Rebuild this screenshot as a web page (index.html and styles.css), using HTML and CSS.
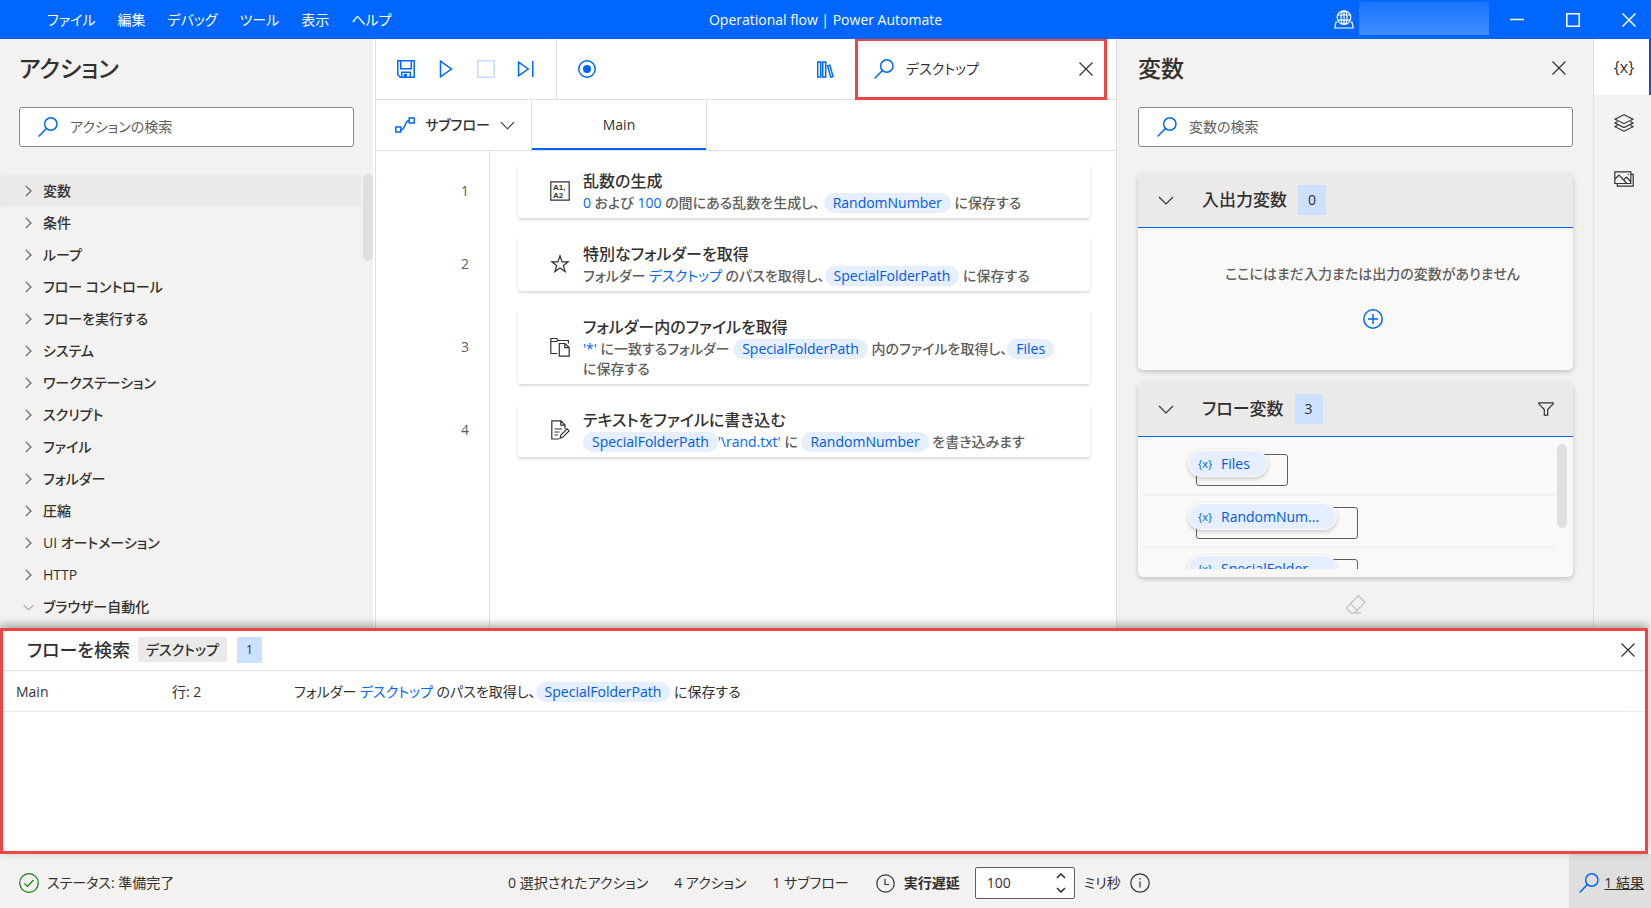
FILE: index.html
```html
<!DOCTYPE html>
<html lang="ja">
<head>
<meta charset="utf-8">
<meta name="viewport" content="width=device-width, initial-scale=1">
<title>Operational flow | Power Automate</title>
<link rel="stylesheet" href="styles.css">
</head>
<body>
<svg class="defs" aria-hidden="true">
  <symbol id="search" viewBox="0 0 20 20"><circle cx="12.8" cy="7" r="6.2"/><path d="M8.4 11.4.6 19.4"/></symbol>
  <symbol id="close" viewBox="0 0 14 14"><path d="M.5.5l13 13M13.5.5l-13 13"/></symbol>
  <symbol id="down" viewBox="0 0 16 9"><path d="M1 1l7 7 7-7"/></symbol>
  <symbol id="right" viewBox="0 0 7 12"><path d="M.8.8 6 6 .8 11.2"/></symbol>
</svg>

<header class="titlebar">
  <nav class="menu">
    <button>ファイル</button><button>編集</button><button>デバッグ</button><button>ツール</button><button>表示</button><button>ヘルプ</button>
  </nav>
  <h1 class="window-title">Operational flow | Power Automate</h1>
  <div class="window-tools">
    <svg class="icon globe" viewBox="0 0 20 19"><circle cx="10" cy="7.6" r="6.8"/><ellipse cx="10" cy="7.6" rx="3" ry="6.8"/><path d="M3.8 5h12.4M3.8 10.2h12.4M10 .8v13.6M3.4 12.2H2L.8 18h18.4L18 12.2h-1.4"/></svg>
    <span class="account"></span>
    <button aria-label="最小化"><svg class="icon" width="14" height="14" viewBox="0 0 14 14"><path d="M0 6.500h14"/></svg></button>
    <button aria-label="最大化"><svg class="icon" width="14" height="14" viewBox="0 0 14 14"><path d="M.8.8h12.400v12.400H.8z"/></svg></button>
    <button aria-label="閉じる"><svg class="icon" width="14" height="14"><use href="#close"/></svg></button>
  </div>
</header>

<main class="workspace">
  <aside class="actions">
    <h2>アクション</h2>
    <label class="search-box"><svg class="icon blue" width="20" height="20"><use href="#search"/></svg><input type="text" placeholder="アクションの検索" aria-label="アクションの検索"></label>
    <div class="action-area">
      <ul class="action-list">
        <li><button class="selected"><svg class="icon" width="7" height="12"><use href="#right"/></svg>変数</button></li>
        <li><button><svg class="icon" width="7" height="12"><use href="#right"/></svg>条件</button></li>
        <li><button><svg class="icon" width="7" height="12"><use href="#right"/></svg>ループ</button></li>
        <li><button><svg class="icon" width="7" height="12"><use href="#right"/></svg>フロー コントロール</button></li>
        <li><button><svg class="icon" width="7" height="12"><use href="#right"/></svg>フローを実行する</button></li>
        <li><button><svg class="icon" width="7" height="12"><use href="#right"/></svg>システム</button></li>
        <li><button><svg class="icon" width="7" height="12"><use href="#right"/></svg>ワークステーション</button></li>
        <li><button><svg class="icon" width="7" height="12"><use href="#right"/></svg>スクリプト</button></li>
        <li><button><svg class="icon" width="7" height="12"><use href="#right"/></svg>ファイル</button></li>
        <li><button><svg class="icon" width="7" height="12"><use href="#right"/></svg>フォルダー</button></li>
        <li><button><svg class="icon" width="7" height="12"><use href="#right"/></svg>圧縮</button></li>
        <li><button><svg class="icon" width="7" height="12"><use href="#right"/></svg>UI オートメーション</button></li>
        <li><button><svg class="icon" width="7" height="12"><use href="#right"/></svg>HTTP</button></li>
        <li><button><svg class="icon" width="11" height="7"><use href="#down"/></svg>ブラウザー自動化</button></li>
      </ul>
      <span class="thumb"></span>
    </div>
  </aside>

  <section class="editor">
    <div class="toolbar">
      <div class="run-tools">
        <button aria-label="保存"><svg class="icon blue" width="18" height="18" viewBox="0 0 18 18"><path d="M.8.8h16.400v16.400H3.200L.8 14.800zM3.700.8v8h10.600v-8M4.700 17.200v-5h8.600v5M7.500 17v-2.400h1.600V17"/></svg></button>
        <button aria-label="実行"><svg class="icon blue" width="18" height="18" viewBox="0 0 18 18"><path d="M3.500 1.200v15.600L14.500 9z"/></svg></button>
        <button aria-label="停止" disabled><svg class="icon pale" width="18" height="18" viewBox="0 0 18 18"><path d="M.8.8h16.400v16.400H.8z"/></svg></button>
        <button aria-label="次のアクション"><svg class="icon blue" width="18" height="18" viewBox="0 0 18 18"><path d="M1.600 2.200v13.600L11.200 9zM15.800 1v16"/></svg></button>
      </div>
      <button aria-label="レコーダー"><svg class="icon blue" width="18" height="18" viewBox="0 0 18 18"><circle cx="9" cy="9" r="8.200"/><circle class="dot" cx="9" cy="9" r="4"/></svg></button>
      <button class="library" aria-label="ライブラリ"><svg class="icon blue" width="17" height="17" viewBox="0 0 17 17"><path d="M.7 1h3v15h-3zM5.700 1h3v15h-3zM10.600 4.700l2.200-.6 3.200 11.400-2.300.6z"/></svg></button>
      <label class="flow-search"><svg class="icon blue" width="20" height="20"><use href="#search"/></svg><input type="text" value="デスクトップ" aria-label="フローを検索"><button aria-label="クリア"><svg class="icon" width="14" height="14"><use href="#close"/></svg></button></label>
    </div>
    <div class="tabs">
      <button class="subflow"><svg class="icon blue" width="20" height="16" viewBox="0 0 20 16"><path d="M.8 10h5v5h-5zM14.200 1h5v5h-5zM5.800 13C10.500 13 9.500 3.500 14.200 3.500"/></svg><span>サブフロー</span><svg class="icon" width="15" height="9"><use href="#down"/></svg></button>
      <button class="tab">Main</button>
    </div>
    <ol class="steps">
      <li><span class="line">1</span><article class="step">
        <svg class="icon" width="20" height="20" viewBox="0 0 20 20"><path d="M.8.8h18.400v18.400H.8z"/><text x="3" y="9">A1,</text><text x="3" y="17">A2</text></svg>
        <div><h3>乱数の生成</h3><p><b>0</b> および <b>100</b> の間にある乱数を生成し、 <i>RandomNumber</i> に保存する</p></div></article></li>
      <li><span class="line">2</span><article class="step">
        <svg class="icon" width="20" height="20" viewBox="0 0 20 20"><path d="M10 1.800l2.100 6h6.100l-4.900 3.700 1.800 6.100-5.100-3.700-5.100 3.700 1.800-6.100L1.800 7.800h6.100z"/></svg>
        <div><h3>特別なフォルダーを取得</h3><p>フォルダー <b>デスクトップ</b> のパスを取得し、<i>SpecialFolderPath</i> に保存する</p></div></article></li>
      <li><span class="line">3</span><article class="step">
        <svg class="icon" width="20" height="20" viewBox="0 0 20 20"><path d="M7.500 16.500H.8V1.500h6l1.300 2h10.300v3M.8 4.500h6l1.300-1M9.300 6.500h5.700l4.200 4v8.700H9.300zM14.800 6.700v4h4.200"/></svg>
        <div><h3>フォルダー内のファイルを取得</h3><p><b>'*'</b> に一致するフォルダー <i>SpecialFolderPath</i> 内のファイルを取得し、<i>Files</i><br>に保存する</p></div></article></li>
      <li><span class="line">4</span><article class="step">
        <svg class="icon" width="20" height="20" viewBox="0 0 20 20"><path d="M9 19H1.800V.8h9.200l4 4.200v4M10.800 1v4.200H15M4.500 9h7.500M4.500 12h5M4.500 15h3.500M10 18.300l.9-3.200 6.200-6.200 2 2-6.200 6.200z"/></svg>
        <div><h3>テキストをファイルに書き込む</h3><p><i>SpecialFolderPath</i><b>'\rand.txt'</b> に <i>RandomNumber</i> を書き込みます</p></div></article></li>
    </ol>
  </section>

  <aside class="variables">
    <div class="panel-head"><h2>変数</h2><button aria-label="閉じる"><svg class="icon" width="14" height="14"><use href="#close"/></svg></button></div>
    <label class="search-box"><svg class="icon blue" width="20" height="20"><use href="#search"/></svg><input type="text" placeholder="変数の検索" aria-label="変数の検索"></label>
    <section class="card">
      <header><svg class="icon" width="16" height="9"><use href="#down"/></svg><h3>入出力変数</h3><span class="count">0</span></header>
      <div class="empty"><p>ここにはまだ入力または出力の変数がありません</p>
        <button aria-label="追加"><svg class="icon blue" width="20" height="20" viewBox="0 0 20 20"><circle cx="10" cy="10" r="9.200"/><path d="M10 5v10M5 10h10"/></svg></button></div>
    </section>
    <section class="card">
      <header><svg class="icon" width="16" height="9"><use href="#down"/></svg><h3>フロー変数</h3><span class="count">3</span><button class="filter" aria-label="フィルター"><svg class="icon" width="16" height="14" viewBox="0 0 16 14"><path d="M.8.800h14.400v1L9.700 7.500v5.700H6.300V7.500L.8 1.800z"/></svg></button></header>
      <div class="var-area">
        <ul class="var-list">
          <li><span class="frame short"><button class="pill"><small>{x}</small>Files</button></span></li>
          <li><span class="frame"><button class="pill"><small>{x}</small>RandomNum...</button></span></li>
          <li><span class="frame"><button class="pill"><small>{x}</small>SpecialFolder...</button></span></li>
        </ul>
        <span class="thumb"></span>
      </div>
    </section>
    <button class="eraser" aria-label="値の消去" disabled><svg class="icon" width="20" height="19" viewBox="0 0 20 19"><path d="M12.500.8l6.500 6.500-8.200 8.200-1.800 2.500H5L1 14l-.3-1.500zM4.600 8.700l6.400 6.600M5 18h10"/></svg></button>
  </aside>

  <nav class="rail">
    <button class="active" aria-label="変数">{x}</button>
    <button aria-label="UI 要素"><svg class="icon" width="20" height="18" viewBox="0 0 20 18"><path d="M10 .8l9 4.400-9 4.500-9-4.500zM3.500 7.500L1 9l9 4.500L19 9l-2.500-1.500M3.500 11.300L1 12.700l9 4.500 9-4.500-2.500-1.400"/></svg></button>
    <button aria-label="画像"><svg class="icon" width="20" height="16" viewBox="0 0 20 16"><path d="M.8.800h16v11.700H.8zM17 3.300h2.200v11.900H3.300v-2.700M1 8l4-4 7.500 8M9.500 9l3-3 4 4.500"/><path d="M14 3.500h1"/></svg></button>
  </nav>
</main>

<section class="results">
  <header><h2>フローを検索</h2><span class="term">デスクトップ</span><span class="count">1</span><button aria-label="閉じる"><svg class="icon" width="14" height="14"><use href="#close"/></svg></button></header>
  <table><tbody><tr><td class="where">Main</td><td class="row-no">行: 2</td><td>フォルダー <b>デスクトップ</b> のパスを取得し、<i>SpecialFolderPath</i> に保存する</td></tr></tbody></table>
</section>

<footer class="status">
  <div class="state"><svg class="icon ok" width="20" height="20" viewBox="0 0 20 20"><circle cx="10" cy="10" r="9.300"/><path d="M5.500 10.500l3 3 6-6.500"/></svg>ステータス: 準備完了</div>
  <div class="facts"><span>0 選択されたアクション</span><span>4 アクション</span><span>1 サブフロー</span></div>
  <div class="delay">
    <svg class="icon" width="19" height="19" viewBox="0 0 19 19"><circle cx="9.500" cy="9.500" r="8.700"/><path d="M9 5v5.500h4"/></svg>
    <label for="delay">実行遅延</label>
    <span class="stepper"><input id="delay" type="number" value="100"><span><button aria-label="増やす"><svg class="icon" width="10" height="6" viewBox="0 0 10 6"><path d="M1 5l4-4 4 4"/></svg></button><button aria-label="減らす"><svg class="icon" width="10" height="6" viewBox="0 0 10 6"><path d="M1 1l4 4 4-4"/></svg></button></span></span>
    <span>ミリ秒</span>
    <svg class="icon" width="20" height="20" viewBox="0 0 20 20"><circle cx="10" cy="10" r="9.200"/><path d="M10 8.500v6M10 5v1.500"/></svg>
  </div>
  <a class="hits" href="#"><svg class="icon blue" width="20" height="20"><use href="#search"/></svg><span>1 結果</span></a>
</footer>
</body>
</html>
```
FILE: styles.css
```css
* { box-sizing: border-box; }
body {
  margin: 0;
  height: 100vh;
  display: flex;
  flex-direction: column;
  overflow: hidden;
  background: #f3f2f1;
  color: #323130;
  font: 14px/20px "Open Sans", "Noto Sans CJK JP", sans-serif;
  font-feature-settings: "palt";
}
h1, h2, h3, p, ul, ol { margin: 0; padding: 0; font-weight: 500; }
ul, ol { list-style: none; }
button, input { font: inherit; font-feature-settings: inherit; color: inherit; border: 0; padding: 0; background: none; }
input { outline: 0; min-width: 0; }
button { display: flex; align-items: center; justify-content: center; white-space: nowrap; }
b { font-weight: 400; color: #0066ff; }
i { font-style: normal; color: #0058e6; background: #e5efff; border-radius: 10px; padding: 0 9px; display: inline-block; line-height: 20px; }
.defs { position: absolute; width: 0; height: 0; }
.icon { fill: none; stroke: currentColor; stroke-width: 1.2; flex: none; display: block; }
.blue { color: #0066ff; stroke-width: 1.5; }
.pale { color: #c5dcff; stroke-width: 1.6; }
.dot { fill: currentColor; stroke: none; }
.thumb { width: 10px; border-radius: 5px; background: #e1dfdd; flex: none; }
.count { background: #cce0ff; width: 28px; height: 30px; line-height: 30px; text-align: center; }

.titlebar { display: grid; grid-template-columns: 1fr auto 1fr; align-items: center; height: 39px; flex: none; background: #0066ff; color: #fff; }
.menu { display: flex; gap: 22px; padding-left: 47px; }
.window-title { font-size: 14px; font-weight: 400; }
.window-tools { display: flex; justify-content: flex-end; align-items: center; padding-right: 15px; }
.window-tools button { width: 15px; height: 30px; margin-left: 41px; }
.window-tools button:first-of-type { margin-left: 20px; }
.window-tools .icon { stroke-width: 1.5; }
.window-tools .globe { width: 20px; height: 19px; stroke-width: 1.2; }
.account { width: 130px; height: 33px; margin: 0 0 2px 5px; background: linear-gradient(#1a75ff, #408cff); }

.workspace { display: grid; grid-template-columns: 375px 1fr 476px 58px; flex: 1; min-height: 0; overflow: hidden; }
h2 { font-size: 23px; line-height: 32px; }
.actions { padding: 13px 0 0; border-right: 2px solid #fff; min-height: 0; }
.actions h2 { padding-left: 19px; margin-bottom: 23px; }
.search-box { display: flex; align-items: center; gap: 12px; height: 40px; padding: 0 19px 0 18px; border: 1px solid #8a8886; border-radius: 3px; background: #fff; }
.search-box input { flex: 1; }
.search-box input::placeholder { color: #605e5c; opacity: 1; }
.actions .search-box { margin: 0 19px 27px; }
.action-area { display: flex; justify-content: space-between; }
.action-list { width: 361px; padding-top: 1px; }
.action-list button { width: 100%; height: 32px; justify-content: flex-start; padding-left: 25px; gap: 11px; font-weight: 500; }
.action-list svg { color: #605e5c; }
.action-list li:last-child button { padding-left: 23px; gap: 9px; }
.action-list .selected { background: #ebeae9; border-radius: 2px; }
.action-area .thumb { height: 87px; }

.editor { background: #fff; border: solid #e1dfdd; border-width: 0 1px; display: flex; flex-direction: column; min-width: 0; }
.toolbar { display: flex; align-items: center; height: 61px; flex: none; border-bottom: 1px solid #e1dfdd; }
.run-tools { display: flex; align-items: center; gap: 22px; height: 60px; padding: 0 21px; border-right: 1px solid #e1dfdd; margin-right: 21px; }
.library { margin: 0 21px 0 auto; }
.flow-search { display: flex; align-items: center; gap: 12px; width: 252px; height: 62px; margin-right: 9px; padding: 0 11px 0 16px; border: 3px solid #eb4642; }
.flow-search input { flex: 1; }
.tabs { display: flex; height: 51px; flex: none; border-bottom: 1px solid #e1dfdd; }
.subflow { width: 156px; border-right: 1px solid #e1dfdd; font-weight: 500; gap: 10px; padding-left: 3px; }
.tab { width: 175px; border-right: 1px solid #e1dfdd; box-shadow: inset 0 -2px #0066ff; font-weight: 500; }
.steps { flex: 1; display: flex; flex-direction: column; gap: 18px; padding: 12px 26px 0 0; background: linear-gradient(#e1dfdd, #e1dfdd) 113px 0 / 1px 100% no-repeat; }
.steps li { display: grid; grid-template-columns: 142px 1fr; align-items: center; }
.line { padding-left: 85px; color: #605e5c; }
.step { display: grid; grid-template-columns: 20px 1fr; gap: 13px; align-items: center; padding: 6px 12px 5px 32px; border-radius: 3px; background: #fff; box-shadow: 0 2px 3px #00000024; white-space: nowrap; }
.step h3 { font-size: 16px; line-height: 24px; }
.step p { color: #605e5c; }
.step text { font: bold 8px "Liberation Sans", sans-serif; fill: currentColor; stroke: none; }

.variables { padding: 13px 20px 0 21px; min-width: 0; min-height: 0; }
.panel-head { display: flex; justify-content: space-between; align-items: center; margin-bottom: 23px; padding-right: 7px; }
.card { margin-top: 12px; background: #faf9f8; border-radius: 5px; box-shadow: 0 2px 5px #00000033; overflow: hidden; }
.search-box + .card { margin-top: 26px; }
.card header { display: flex; align-items: center; height: 55px; padding: 0 19px 0 20px; background: #ebeae9; border-bottom: 1px solid #0066ff; }
.card h3 { font-size: 17px; margin: 0 11px 0 28px; }
.filter { margin-left: auto; }
.empty { height: 142px; display: flex; flex-direction: column; align-items: center; gap: 25px; padding: 36px 0 0 34px; color: #605e5c; }
.empty p { font-weight: 500; }
.var-area { display: flex; justify-content: space-between; height: 132px; overflow: hidden; padding: 0 6px 0 5px; margin-bottom: 8px; }
.var-area .thumb { height: 84px; margin-top: 7px; }
.var-list { width: 413px; }
.var-list li { height: 52px; padding: 11px 0 0 53px; border-bottom: 2px solid #f3f2f1; }
.var-list li:first-child { height: 59px; padding-top: 17px; }
.frame { display: block; position: relative; width: 162px; height: 32px; border: 1px solid #605e5c; border-radius: 3px; }
.frame.short { width: 92px; }
.pill { position: absolute; left: -9px; top: -5px; width: 149px; height: 27px; justify-content: flex-start; gap: 9px; padding-left: 9px; border: 1px solid #fff; border-radius: 14px; background: #e5efff; color: #0058e6; box-shadow: 0 2px 4px #00000030; }
.short .pill { width: 80px; }
.pill small { font-size: 11px; }
.eraser { margin: 18px auto 0; color: #c8c6c4; }
.eraser svg { stroke-width: 1.5; }
.rail { border-left: 1px solid #e1dfdd; }
.rail button { width: 100%; height: 56px; padding-left: 3px; font-size: 16px; }
.rail .active { background: #fff; box-shadow: inset -2px 0 #0058e6; }

.results { position: relative; height: 226px; flex: none; margin-right: 3px; border: 3px solid #eb4642; background: #fff; box-shadow: 0 -3px 9px #00000055, 3px 0 #fff; }
.results header { display: flex; align-items: center; height: 40px; padding: 0 10px 2px 24px; border-bottom: 1px solid #e1dfdd; }
.results h2 { font-size: 18px; line-height: 24px; margin-right: 8px; }
.term { height: 25px; line-height: 25px; padding: 0 8px; border-radius: 2px; background: #ebeae9; font-weight: 500; }
.results .count { width: 25px; height: 26px; line-height: 26px; margin-left: 10px; font-size: 12px; }
.results header button { margin-left: auto; }
table { width: 100%; border-collapse: collapse; }
td { height: 40px; padding: 2px 0 0; border-bottom: 1px solid #edebe9; }
.where { width: 169px; padding-left: 13px; }
.row-no { width: 122px; }

.status { display: flex; align-items: center; height: 54px; flex: none; white-space: nowrap; }
.state, .facts, .delay { padding-top: 4px; }
.state { display: flex; align-items: center; gap: 8px; width: 508px; padding-left: 19px; }
.ok { color: #107c10; }
.facts { display: flex; gap: 26px; }
.delay { display: flex; align-items: center; gap: 9px; margin-left: 27px; }
.delay label { font-weight: 700; }
.stepper { display: flex; width: 100px; height: 32px; padding: 0 8px 0 11px; margin-left: 6px; border: 1px solid #605e5c; border-radius: 2px; background: #fff; }
.stepper input { flex: 1; width: 40px; appearance: textfield; }
.stepper input::-webkit-inner-spin-button { appearance: none; }
.stepper > span { display: flex; flex-direction: column; justify-content: center; gap: 8px; }
.stepper svg { stroke-width: 1.6; }
.hits { display: flex; align-items: center; gap: 5px; height: 100%; margin-left: auto; padding: 4px 7px 0 10px; background: #e1dfdd; color: inherit; }
```
